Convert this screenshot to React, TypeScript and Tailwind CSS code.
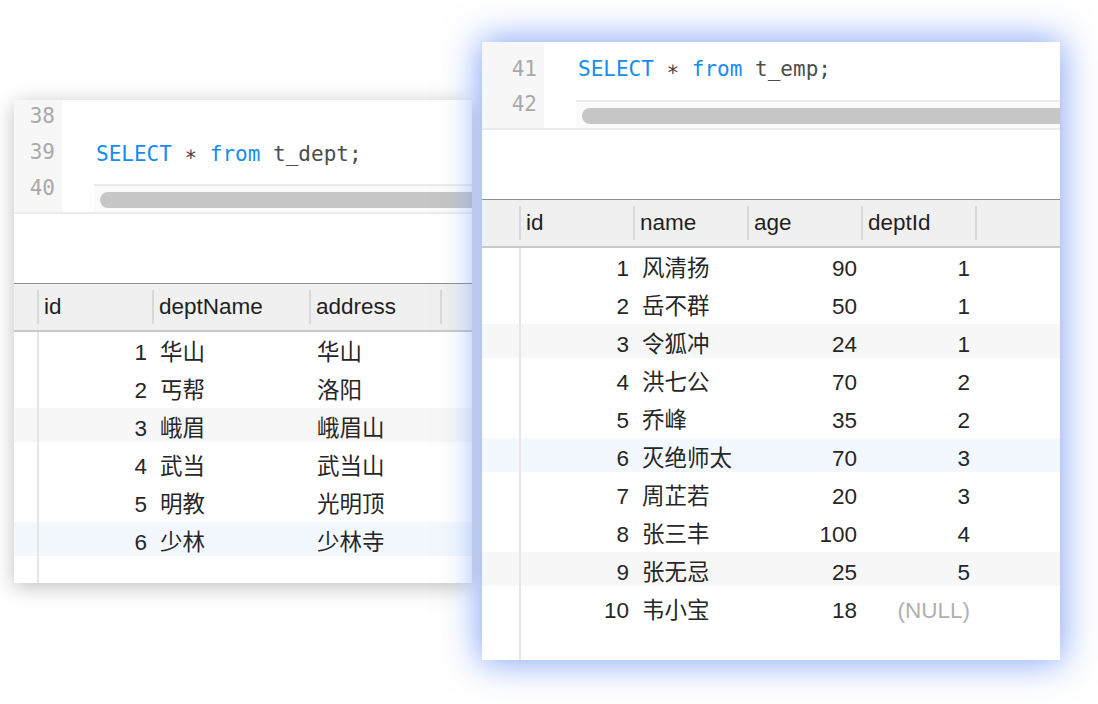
import React from 'react';

const sans = "font-['Liberation_Sans','Noto_Sans_CJK_SC',sans-serif]";
const mono = "font-['DejaVu_Sans_Mono',monospace]";

type Col = { head: string; hw: string; dw: string };

const rowBg: Record<string, string> = {
  none: '',
  gray: 'bg-[linear-gradient(to_bottom,#f7f7f7_34px,transparent_34px)]',
  blue: 'bg-[linear-gradient(to_bottom,#f3f8fe_34px,transparent_34px)]',
};

// code editor strip with gutter and overlay scrollbar
const Editor = ({
  nums,
  lines,
  gutter,
  shell,
}: {
  nums: string[];
  lines: React.ReactNode[];
  gutter: string;
  shell: string;
}) => (
  <div className={`flex shrink-0 overflow-hidden border-b-2 border-[#ececec] ${mono} text-[21px] ${shell}`}>
    <div className={`bg-[#f7f7f7] text-right pr-[7px] text-[#a9a9a9] ${gutter}`}>
      {nums.map((n) => (
        <div key={n}>{n}</div>
      ))}
    </div>
    <div className="relative flex-1 pl-[34px] whitespace-pre text-[#4d4d4d]">
      {lines.map((l, i) => (
        <div key={i}>{l || '\u00a0'}</div>
      ))}
      <div className="absolute left-[32px] -right-[40px] bottom-0 h-[28px] border-t-2 border-[#ebebeb] bg-[#fbfbfb] pl-[6px] pt-[6px]">
        <div className="h-[16px] rounded-full bg-[#c6c6c6]" />
      </div>
    </div>
  </div>
);

const Query = ({ table }: { table: string }) => (
  <>
    <span className="text-[#168cf2]">SELECT</span> <span className="text-[#444]">∗</span>{' '}
    <span className="text-[#168cf2]">from</span> {table};
  </>
);

const Grid = ({
  cols,
  narrow,
  rows,
  bgs,
  cellFor,
}: {
  cols: Col[];
  narrow: [string, string];
  rows: string[][];
  bgs: string[];
  cellFor: (ci: number, v: string) => React.ReactNode;
}) => (
  <div className={`flex flex-1 flex-col ${sans} text-[22.5px]`}>
    <div className="flex h-[49px] shrink-0 items-center border-t border-b-2 border-t-[#8f8f8f] border-b-[#c8c8c8] bg-[#f0f0f0] text-[#1f1f1f]">
      <div className={narrow[0]} />
      <div className="h-[34px] w-[2px] bg-[#d9d9d9]" />
      {cols.map((c) => (
        <React.Fragment key={c.head}>
          <div className={`pl-[5px] ${c.hw}`}>{c.head}</div>
          <div className="h-[34px] w-[2px] bg-[#d9d9d9]" />
        </React.Fragment>
      ))}
    </div>
    {rows.map((r, ri) => (
      <div key={ri} className={`flex h-[38px] shrink-0 text-[#262626] ${rowBg[bgs[ri] || 'none']}`}>
        <div className={`border-r-2 border-[#e6e6e6] ${narrow[1]}`} />
        {r.map((v, ci) => (
          <div key={ci} className={`flex items-center pt-[3px] ${cols[ci].dw}`}>
            {cellFor(ci, v)}
          </div>
        ))}
      </div>
    ))}
    <div className="flex flex-1">
      <div className={`border-r-2 border-[#e6e6e6] ${narrow[1]}`} />
    </div>
  </div>
);

const deptCols: Col[] = [
  { head: 'id', hw: 'w-[113px]', dw: 'w-[115px] justify-end pr-[7px]' },
  { head: 'deptName', hw: 'w-[155px]', dw: 'w-[157px] pl-[6px]' },
  { head: 'address', hw: 'w-[129px]', dw: 'w-[131px] pl-[6px]' },
];

const deptRows = [
  ['1', '华山', '华山'],
  ['2', '丐帮', '洛阳'],
  ['3', '峨眉', '峨眉山'],
  ['4', '武当', '武当山'],
  ['5', '明教', '光明顶'],
  ['6', '少林', '少林寺'],
];

const empCols: Col[] = [
  { head: 'id', hw: 'w-[112px]', dw: 'w-[114px] justify-end pr-[6px]' },
  { head: 'name', hw: 'w-[112px]', dw: 'w-[114px] pl-[7px]' },
  { head: 'age', hw: 'w-[112px]', dw: 'w-[114px] justify-end pr-[6px]' },
  { head: 'deptId', hw: 'w-[112px]', dw: 'w-[114px] justify-end pr-[7px]' },
];

const empRows = [
  ['1', '风清扬', '90', '1'],
  ['2', '岳不群', '50', '1'],
  ['3', '令狐冲', '24', '1'],
  ['4', '洪七公', '70', '2'],
  ['5', '乔峰', '35', '2'],
  ['6', '灭绝师太', '70', '3'],
  ['7', '周芷若', '20', '3'],
  ['8', '张三丰', '100', '4'],
  ['9', '张无忌', '25', '5'],
  ['10', '韦小宝', '18', ''],
];

const App: React.FC = () => {
  return (
    <div className="flex h-[704px] w-[1098px] items-start overflow-hidden bg-white">
      {/* t_dept result */}
      <div className="ml-[14px] mt-[100px] flex h-[483px] w-[458px] shrink-0 flex-col overflow-hidden bg-white shadow-[0_4px_20px_rgba(0,0,0,0.25)]">
        <Editor
          nums={['38', '39', '40']}
          lines={['', <Query key="q" table="t_dept" />]}
          gutter="w-[48px] leading-[36px] -mt-[2px] pt-[0px]"
          shell="h-[114px] leading-[36px]"
        />
        <div className="h-[69px] shrink-0" />
        <Grid
          cols={deptCols}
          narrow={['w-[23px]', 'w-[25px]']}
          rows={deptRows}
          bgs={['none', 'none', 'gray', 'none', 'none', 'blue']}
          cellFor={(_, v) => v}
        />
      </div>

      {/* t_emp result */}
      <div className="relative z-10 ml-[10px] mt-[42px] flex h-[618px] w-[578px] shrink-0 flex-col overflow-hidden bg-white shadow-[0_0_34px_2px_rgba(105,145,245,0.85)]">
        <Editor
          nums={['41', '42']}
          lines={[<Query key="q" table="t_emp" />]}
          gutter="w-[62px] pt-[10px] leading-[35px]"
          shell="h-[88px] leading-[35px] [&>div:last-child]:pt-[10px]"
        />
        <div className="h-[69px] shrink-0" />
        <Grid
          cols={empCols}
          narrow={['w-[37px]', 'w-[39px]']}
          rows={empRows}
          bgs={['none', 'none', 'gray', 'none', 'none', 'blue', 'none', 'none', 'gray', 'none']}
          cellFor={(ci, v) =>
            ci === 3 && v === '' ? <span className="text-[#b0b0b0]">(NULL)</span> : v
          }
        />
      </div>
    </div>
  );
};

export default App;
